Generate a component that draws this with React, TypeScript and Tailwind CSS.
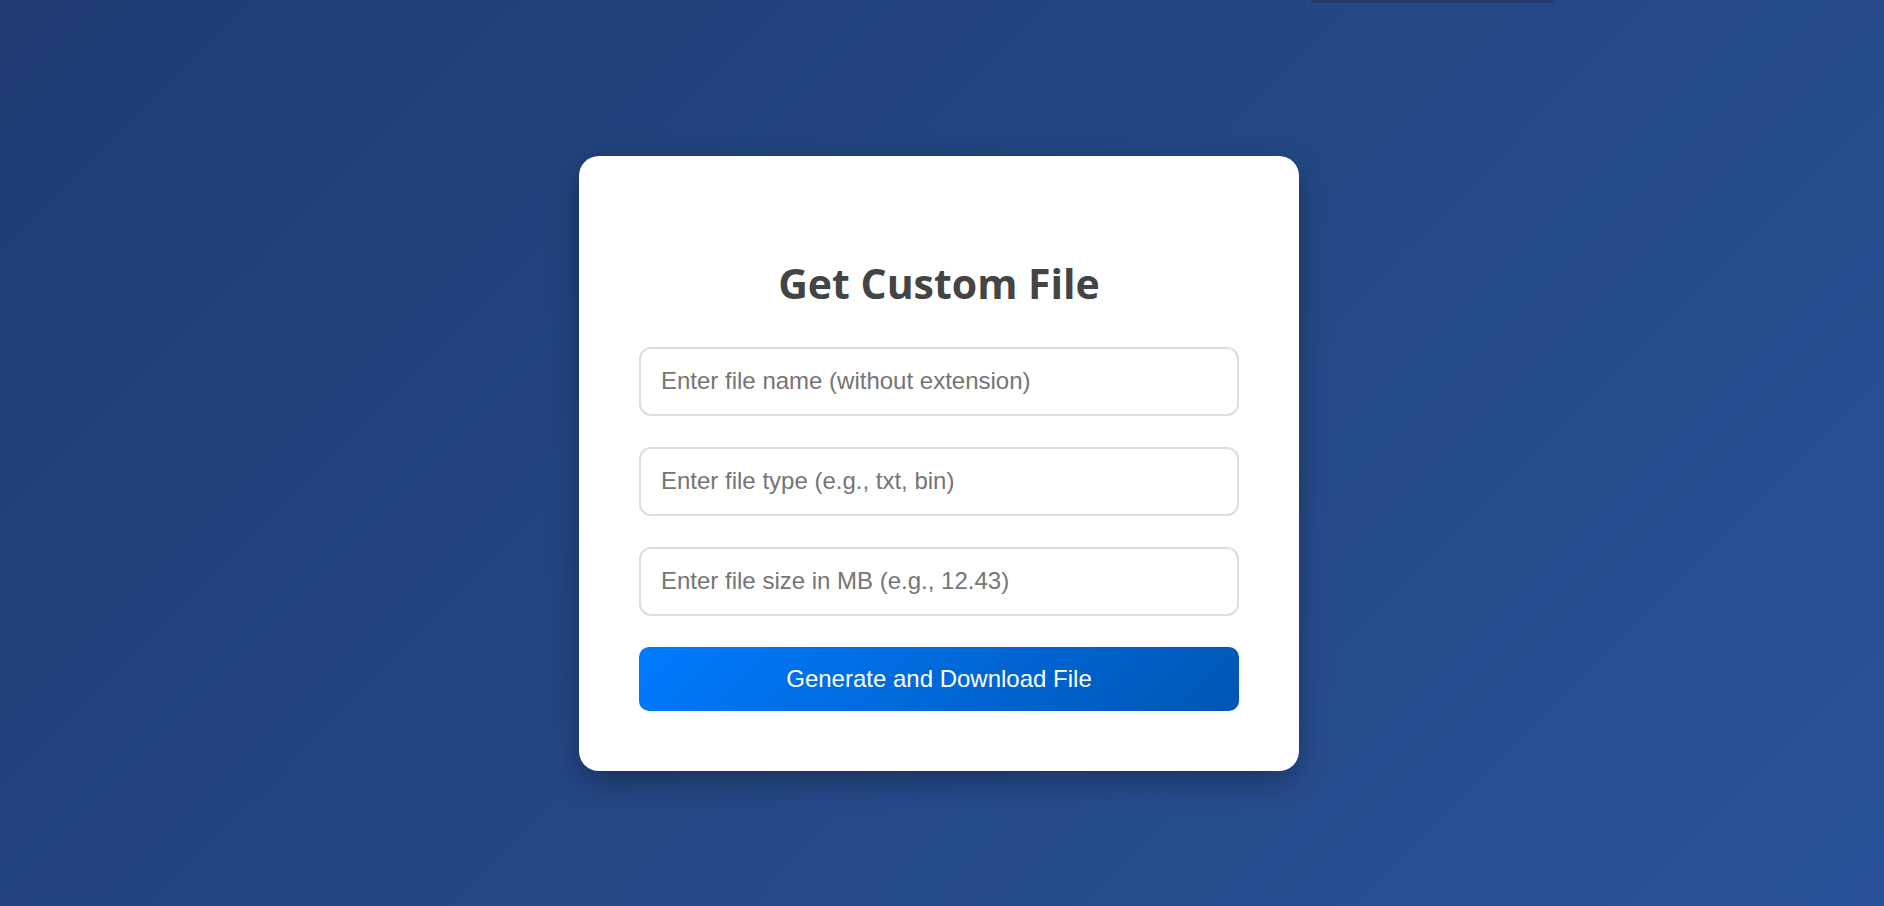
import { useState } from 'react'

// Fields shown on the form, top to bottom
const FIELDS = [
  { key: 'name', placeholder: 'Enter file name (without extension)' },
  { key: 'type', placeholder: 'Enter file type (e.g., txt, bin)' },
  { key: 'size', placeholder: 'Enter file size in MB (e.g., 12.43)' },
]

export default function App() {
  const [values, setValues] = useState<Record<string, string>>({ name: '', type: '', size: '' })

  const generate = () => {
    const mb = parseFloat(values.size)
    if (!values.name || !values.type || isNaN(mb) || mb <= 0) return
    const blob = new Blob([new Uint8Array(Math.round(mb * 1024 * 1024))])
    const url = URL.createObjectURL(blob)
    const a = document.createElement('a')
    a.href = url
    a.download = `${values.name}.${values.type}`
    a.click()
    URL.revokeObjectURL(url)
  }

  return (
    <div className="relative min-h-screen w-full flex items-center justify-center pt-[20px] pr-[6px] bg-[linear-gradient(135deg,#1e3c72,#2a5298)]">
      {/* thin strip peeking in at the top edge */}
      <div className="absolute top-0 left-[1311px] w-[244px] h-[3px] bg-[#243b69]" />

      <div className="w-[720px] bg-white rounded-[20px] px-[60px] pt-[60px] pb-[60px] shadow-[0_10px_30px_rgba(0,0,0,0.3)]">
        <h1
          className="mt-[43px] mb-[39px] text-center text-[41px] leading-[49px] font-bold text-[#444]"
          style={{ fontFamily: '"Open Sans", "Noto Sans", sans-serif' }}
        >
          Get Custom File
        </h1>

        <div className="flex flex-col gap-[31px]" style={{ fontFamily: '"Liberation Sans", Arial, sans-serif' }}>
          {FIELDS.map(f => (
            <input
              key={f.key}
              type="text"
              value={values[f.key]}
              onChange={e => setValues({ ...values, [f.key]: e.target.value })}
              placeholder={f.placeholder}
              className="block w-full h-[69px] border-2 border-[#ddd] rounded-[12px] px-[20px] text-[24px] text-[#333] placeholder:text-[#757575] outline-none"
            />
          ))}

          <button
            onClick={generate}
            className="w-full h-[64px] rounded-[10px] text-white text-[24px] bg-[linear-gradient(135deg,#007bff,#0056b3)] cursor-pointer"
          >
            Generate and Download File
          </button>
        </div>
      </div>
    </div>
  )
}
